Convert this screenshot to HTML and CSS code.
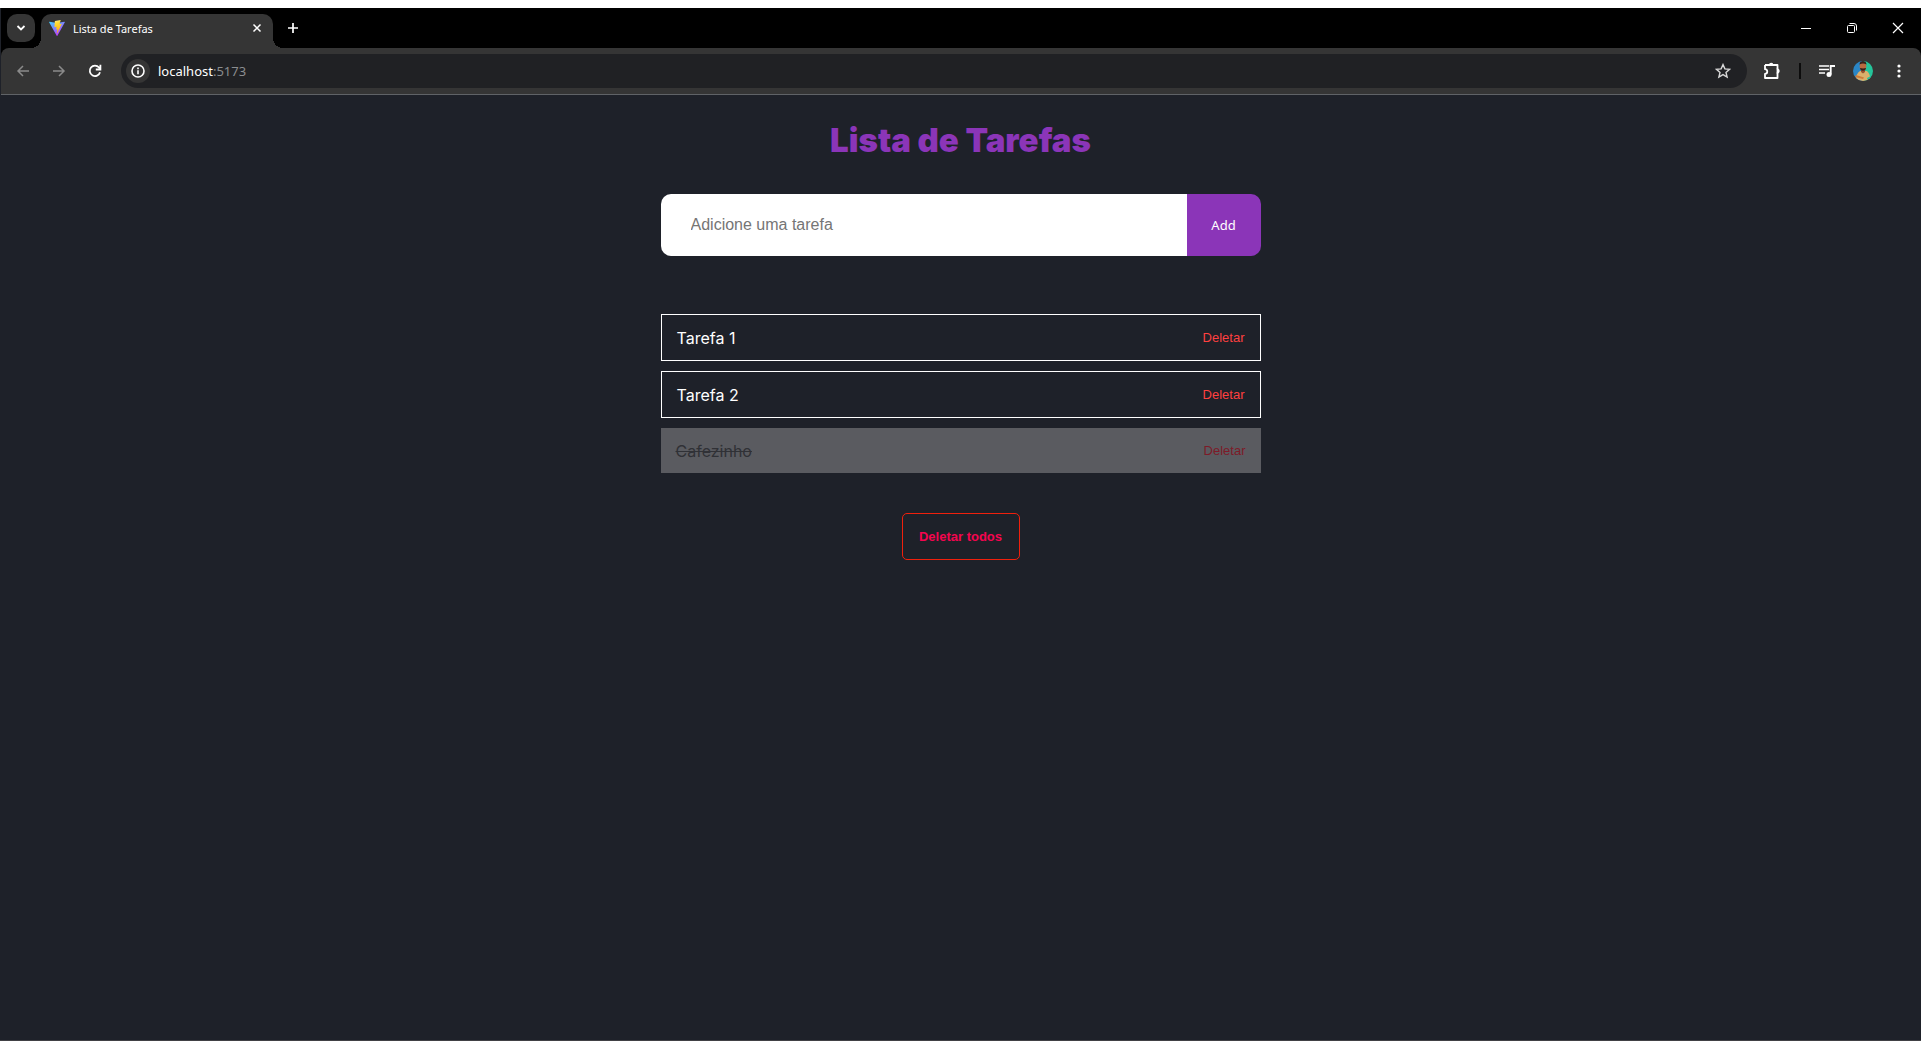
FILE: index.html
```html
<!DOCTYPE html>
<html lang="pt-BR">
<head>
<meta charset="utf-8">
<meta name="viewport" content="width=device-width, initial-scale=1">
<title>Lista de Tarefas</title>
<link rel="stylesheet" href="styles.css">
</head>
<body>
<div class="window">
  <header class="browser">
    <div class="tab-strip">
      <button class="tab-search" type="button" aria-label="Pesquisar guias">
        <svg width="10" height="8" viewBox="0 0 10 8"><path d="M1.5 2 5 5.5 8.500 2" fill="none" stroke="currentColor" stroke-width="1.800"/></svg>
      </button>
      <div class="tab">
        <svg class="favicon" width="16" height="16" viewBox="0 0 32 32">
          <defs>
            <linearGradient id="tri" x1="0" y1="0" x2=".6" y2="1"><stop offset="0" stop-color="#41d1ff"/><stop offset="1" stop-color="#bd34fe"/></linearGradient>
            <linearGradient id="bolt" x1=".4" y1="0" x2=".6" y2="1"><stop offset="0" stop-color="#ffea83"/><stop offset=".2" stop-color="#ffdd35"/><stop offset="1" stop-color="#ffa800"/></linearGradient>
          </defs>
          <path fill="url(#tri)" d="M31.700 4.700 16.800 31.300c-.3.600-1.100.6-1.400 0L.2 4.700c-.3-.6.200-1.300.9-1.200l14.900 2.700L30.800 3.500c.7-.1 1.200.6.9 1.200z"/>
          <path fill="url(#bolt)" d="M23 0 12 2.200c-.2 0-.3.200-.3.400L11 14c0 .3.200.5.500.4l3.100-.7c.3-.1.500.2.500.5l-.9 4.500c-.1.300.2.500.500.4l1.900-.6c.3-.1.600.2.500.5l-1.500 7c-.1.400.5.700.7.300l9-18c.1-.3-.1-.6-.4-.6l-3.200.6c-.3.100-.5-.2-.5-.5L23.300.5c.1-.3-.1-.5-.3-.5z"/>
        </svg>
        <span class="tab-title">Lista de Tarefas</span>
        <button class="icon-button" type="button" aria-label="Fechar guia">
          <svg width="10" height="10" viewBox="0 0 10 10"><path d="M1.500 1.500l7 7M8.500 1.500l-7 7" stroke="currentColor" stroke-width="1.500"/></svg>
        </button>
      </div>
      <button class="icon-button new-tab" type="button" aria-label="Nova guia">
        <svg width="12" height="12" viewBox="0 0 12 12"><path d="M6 1v10M1 6h10" stroke="currentColor" stroke-width="1.700"/></svg>
      </button>
      <div class="window-controls">
        <button class="icon-button" type="button" aria-label="Minimizar">
          <svg width="12" height="12" viewBox="0 0 12 12"><path d="M1 6.500h10" stroke="currentColor"/></svg>
        </button>
        <button class="icon-button" type="button" aria-label="Restaurar">
          <svg width="12" height="12" viewBox="0 0 12 12" fill="none" stroke="currentColor"><rect x="1.500" y="3.500" width="7" height="7" rx="1"/><path d="M3.500 1.500H8q2.500 0 2.500 2.500v4.500"/></svg>
        </button>
        <button class="icon-button" type="button" aria-label="Fechar">
          <svg width="12" height="12" viewBox="0 0 12 12"><path d="M1 1l10 10M11 1 1 11" stroke="currentColor" stroke-width="1.200"/></svg>
        </button>
      </div>
    </div>
    <div class="toolbar">
      <nav class="nav-buttons">
        <button class="icon-button dim" type="button" aria-label="Voltar">
          <svg width="14" height="14" viewBox="0 0 14 14" fill="none" stroke="currentColor" stroke-width="1.500"><path d="M13 7H2M7 2 2 7l5 5"/></svg>
        </button>
        <button class="icon-button dim" type="button" aria-label="Avançar">
          <svg width="14" height="14" viewBox="0 0 14 14" fill="none" stroke="currentColor" stroke-width="1.500"><path d="M1 7h11M7 2l5 5-5 5"/></svg>
        </button>
        <button class="icon-button" type="button" aria-label="Recarregar">
          <svg width="14" height="14" viewBox="0 0 14 14" fill="none" stroke="currentColor" stroke-width="1.800"><path d="M12 8.200A5.200 5.200 0 1 1 11 3.500L12.500 5M12.400 0.800v4.700H7.800"/></svg>
        </button>
      </nav>
      <div class="address">
        <button class="site-info" type="button" aria-label="Informações do site">
          <svg width="14" height="14" viewBox="0 0 14 14" fill="none" stroke="currentColor" stroke-width="1.600"><circle cx="7" cy="7" r="6"/><path d="M7 6.200v4M7 3.600v1.600"/></svg>
        </button>
        <a class="url" href="#">localhost<span class="port">:5173</span></a>
        <button class="icon-button" type="button" aria-label="Favoritar">
          <svg width="16" height="16" viewBox="0 0 16 16"><path d="M8 1.600 9.900 5.900l4.600.4-3.500 3.100 1.100 4.600L8 11.600 3.900 14 5 9.400 1.500 6.300l4.600-.4z" fill="none" stroke="#d8d8d8" stroke-width="1.400"/></svg>
        </button>
      </div>
      <div class="actions">
        <button class="icon-button" type="button" aria-label="Extensões">
          <svg width="18" height="18" viewBox="0 0 18 18"><path d="M2 3h12.500v4.200M14.500 10.500V16H2v-4.200c3 0 3-4.600 0-4.600V3" fill="none" stroke="currentColor" stroke-width="1.800" stroke-linejoin="round"/><path d="M6 3a2.200 2.200 0 0 1 4.400 0zM14.500 6.800a2.200 2.200 0 0 1 0 4.400z" fill="currentColor"/><path d="M14.500 6.500v5" stroke="currentColor" stroke-width="1.800"/></svg>
        </button>
        <span class="divider"></span>
        <button class="icon-button" type="button" aria-label="Controle de mídia">
          <svg width="16" height="14" viewBox="0 0 16 14"><path d="M0 2h10M0 5.500h10M0 9h6" stroke="currentColor" stroke-width="1.700"/><circle cx="10" cy="10.500" r="2.500" fill="currentColor"/><path d="M11.700 10.500V2H16" fill="none" stroke="currentColor" stroke-width="1.900"/></svg>
        </button>
        <button class="icon-button" type="button" aria-label="Perfil">
          <svg width="20" height="20" viewBox="0 0 20 20"><defs><clipPath id="face"><circle cx="10" cy="10" r="10"/></clipPath></defs><g clip-path="url(#face)"><path fill="#2a86c6" d="M0 0h10v20H0z"/><path fill="#25c49a" d="M10 0h10v20H10z"/><path fill="#dcb06b" d="M3 20q0-8 4-10h7q3 2 3.500 10z"/><path fill="#9a5230" d="M8 8h4v3l-2 1.500L8 11z"/><ellipse cx="10" cy="5.200" rx="3.300" ry="4.300" fill="#b86a40"/><path fill="#35201a" d="M6.500 3.500Q6.700 0 10 0t3.500 3.500Q10 1.600 6.500 3.500zM7 7q3 .8 6 0Q12.600 9.800 10 9.800T7 7z"/><path fill="#cf7b38" d="M3 14l8 2.500-1 1.500-8-2z"/><path fill="#25c49a" d="M14 17l4-2v5h-3z"/></g></svg>
        </button>
        <button class="icon-button" type="button" aria-label="Menu">
          <svg width="16" height="14" viewBox="0 0 16 14" fill="currentColor"><circle cx="8" cy="2" r="1.600"/><circle cx="8" cy="7" r="1.600"/><circle cx="8" cy="12" r="1.600"/></svg>
        </button>
      </div>
    </div>
  </header>

  <main class="app">
    <h1 class="title">Lista de Tarefas</h1>
    <form class="task-form">
      <input class="task-input" type="text" placeholder="Adicione uma tarefa" aria-label="Adicione uma tarefa">
      <button class="add-button" type="button">Add</button>
    </form>
    <ul class="task-list">
      <li class="task"><span class="task-name">Tarefa 1</span><button class="delete" type="button">Deletar</button></li>
      <li class="task"><span class="task-name">Tarefa 2</span><button class="delete" type="button">Deletar</button></li>
      <li class="task done"><span class="task-name">Cafezinho</span><button class="delete" type="button">Deletar</button></li>
    </ul>
    <button class="delete-all" type="button">Deletar todos</button>
  </main>
</div>
</body>
</html>
```
FILE: styles.css
```css
* { box-sizing: border-box; margin: 0; padding: 0; }

body { background: #1e2129; color: #fff; font-family: Inter, sans-serif; }

button { background: none; border: 0; color: inherit; font: inherit; cursor: pointer; }

svg { display: block; }

.window {
  display: flex;
  flex-direction: column;
  min-height: 100vh;
  border-top: 8px solid #fff;
  border-bottom: 1px solid #414145;
}

.browser {
  margin-left: 1px;
  background: #000;
  border-bottom: 1px solid #606367;
  font-family: "Noto Sans", sans-serif;
}

.icon-button { display: grid; place-items: center; }

.tab-strip { display: flex; align-items: flex-start; height: 40px; padding: 6px 17px 0 6px; }

.tab-search {
  display: grid;
  place-items: center;
  width: 28px;
  height: 28px;
  margin-right: 6px;
  border-radius: 10px;
  background: #353535;
}

.tab {
  position: relative;
  display: flex;
  align-items: center;
  width: 232px;
  height: 34px;
  padding: 0 11px 6px 8px;
  border-radius: 10px 10px 0 0;
  background: #353535;
}

/* Flared feet joining the tab to the toolbar */
.tab::before,
.tab::after { content: ""; position: absolute; bottom: 0; width: 10px; height: 10px; }
.tab::before { right: 100%; background: radial-gradient(circle at 0 0, transparent 10px, #353535 10px); }
.tab::after { left: 100%; background: radial-gradient(circle at 100% 0, transparent 10px, #353535 10px); }

.tab-title { flex: 1; margin-left: 8px; font-size: 11px; }

.new-tab { width: 28px; height: 28px; margin-left: 6px; }

.window-controls { display: flex; gap: 34px; height: 28px; margin-left: auto; }

.toolbar {
  display: flex;
  align-items: center;
  height: 46px;
  padding: 0 14px 0 15px;
  border-radius: 8px 8px 0 0;
  background: #353535;
}

.nav-buttons { display: flex; gap: 22px; margin-right: 19px; }

.dim { color: #8a8a8a; }

.address {
  display: flex;
  flex: 1;
  align-items: center;
  height: 34px;
  padding: 0 16px 0 5px;
  border-radius: 17px;
  background: #202124;
}

.site-info {
  display: grid;
  place-items: center;
  width: 24px;
  height: 24px;
  border-radius: 50%;
  background: #353535;
}

.url { flex: 1; margin-left: 8px; color: #fff; font-size: 13px; text-decoration: none; }
.port { color: #8b8d90; }

.actions { display: flex; align-items: center; margin-left: 16px; gap: 18px; }

.divider { width: 2px; height: 16px; background: #0c0c0c; }

.app {
  display: flex;
  flex-direction: column;
  align-items: center;
  padding: 21px 16px;
}

.title { color: #8b35b8; font-size: 33px; font-weight: 900; line-height: 48px; }

.task-form { display: flex; width: 100%; max-width: 600px; height: 62px; margin: 30px 0 58px; }

.task-input {
  flex: 1;
  min-width: 0;
  padding: 0 30px;
  border: 0;
  border-radius: 10px 0 0 10px;
  background: #fff;
  font: 16px "Liberation Sans", Arial, sans-serif;
}
.task-input::placeholder { color: #757575; }

.add-button {
  width: 74px;
  border-radius: 0 10px 10px 0;
  background: #8b35b8;
  font: 13px "Noto Sans", sans-serif;
}

.task-list { display: grid; gap: 10px; width: 100%; max-width: 600px; list-style: none; }

.task {
  display: flex;
  align-items: center;
  justify-content: space-between;
  height: 47px;
  padding: 0 15px;
  border: 1px solid #fff;
  font-size: 16px;
}

.delete { color: #ff4040; font: 13px "Liberation Sans", Arial, sans-serif; }

.done { height: 45px; border: 0; background: #5a5b60; color: #303136; }
.done .task-name { text-decoration: line-through; }
.done .delete { color: #7d1a28; }

.delete-all {
  width: 118px;
  height: 47px;
  margin-top: 40px;
  border: 1px solid #f0200c;
  border-radius: 5px;
  color: #f5054f;
  font: bold 13px "Liberation Sans", Arial, sans-serif;
}
```
